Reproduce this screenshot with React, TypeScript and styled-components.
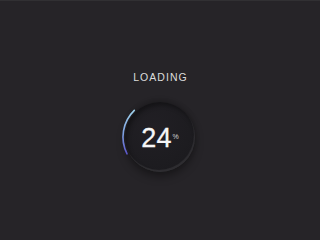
import React from 'react';
import styled, { createGlobalStyle } from 'styled-components';

const Global = createGlobalStyle`
  html, body {
    margin: 0;
    padding: 0;
    background: #262428;
  }
  body {
    font-family: "Liberation Sans", Arial, sans-serif;
  }
`;

const Screen = styled.div`
  width: 320px;
  height: 240px;
  box-sizing: border-box;
  border-top: 1px solid #313033;
  background: #262428;
  display: flex;
  flex-direction: column;
  align-items: center;
  padding-top: 70px;
`;

const Title = styled.div`
  color: #dcdcdc;
  font-size: 10.5px;
  line-height: 12px;
  letter-spacing: 1.05px;
  margin-left: 1px;
`;

const Dial = styled.div`
  position: relative;
  width: 80px;
  height: 80px;
  margin-top: 14px;
  display: flex;
  align-items: center;
  justify-content: center;
`;

const Knob = styled.div`
  width: 70px;
  height: 70px;
  border-radius: 50%;
  background: radial-gradient(circle at 40% 35%, #211f24 0%, #1d1c20 60%, #1a191d 100%);
  box-shadow:
    inset -1px -2px 1px rgba(255, 255, 255, 0.09),
    inset 2px 3px 4px rgba(0, 0, 0, 0.35),
    0 5px 8px rgba(0, 0, 0, 0.35),
    0 -2px 5px rgba(0, 0, 0, 0.2);
  display: flex;
  align-items: center;
  justify-content: center;
`;

const Value = styled.div`
  color: #f6f6f6;
  font-size: 27px;
  line-height: 27px;
  display: flex;
  align-items: flex-start;
  margin-top: 3px;
  -webkit-text-stroke: 0.3px #f6f6f6;
`;

const Unit = styled.span`
  font-size: 7px;
  line-height: 7px;
  margin-top: 8px;
  margin-left: 1px;
  color: #d8d8d8;
  -webkit-text-stroke: 0;
`;

const Ring = styled.svg`
  position: absolute;
  left: 0;
  top: 0;
  width: 80px;
  height: 80px;
  pointer-events: none;
`;

const arcPoint = (deg: number, r: number) => {
  const a = (deg * Math.PI) / 180;
  return `${(40 + r * Math.cos(a)).toFixed(2)} ${(40 - r * Math.sin(a)).toFixed(2)}`;
};

export default function App() {
  const r = 37;
  const d = `M ${arcPoint(134, r)} A ${r} ${r} 0 0 0 ${arcPoint(207, r)}`;
  return (
    <Screen>
      <Global />
      <Title>LOADING</Title>
      <Dial>
        <Knob>
          <Value>
            24<Unit>%</Unit>
          </Value>
        </Knob>
        <Ring viewBox="0 0 80 80">
          <defs>
            <linearGradient id="arcGrad" x1="0" y1="0" x2="0" y2="1">
              <stop offset="0%" stopColor="#9fd2ec" />
              <stop offset="55%" stopColor="#7c9ee0" />
              <stop offset="100%" stopColor="#5b55c8" />
            </linearGradient>
          </defs>
          <path d={d} fill="none" stroke="url(#arcGrad)" strokeWidth="1.6" strokeLinecap="round" />
        </Ring>
      </Dial>
    </Screen>
  );
}
